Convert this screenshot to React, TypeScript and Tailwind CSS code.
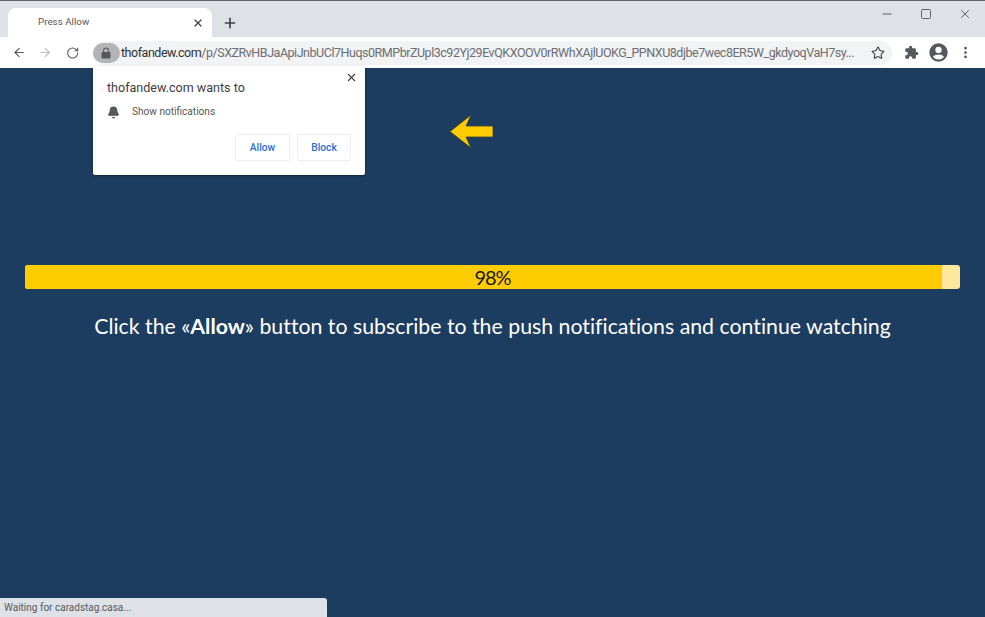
import React from "react";
import { ArrowLeft, ArrowRight, RotateCw, X, Plus, Star, Bell, Minus, Square, MoreVertical } from "lucide-react";

const ui = "font-['Roboto','Noto_Sans',sans-serif]";

export default function App() {
  return (
    <div className={`relative w-[985px] h-[617px] overflow-hidden flex flex-col bg-[#1c3d5f] ${ui}`}>
      {/* Tab strip */}
      <div className="h-[37px] shrink-0 flex items-end bg-[#dee1e6] border-t border-t-[#5f6368] pl-[8px]">
        <div className="w-[204px] h-[29px] bg-white rounded-t-[8px] flex items-center pl-[30px] pr-[8px] justify-between">
          <span className="text-[9.8px] text-[#55585c]">Press Allow</span>
          <X size={12} strokeWidth={2.4} className="text-[#3c4043]" />
        </div>
        <div className="h-[29px] flex items-center ml-[10px]">
          <Plus size={16} strokeWidth={2.4} className="text-[#3c4043]" />
        </div>
        <div className="ml-auto flex items-start self-start pt-[6px] pr-[13px] gap-[26px] text-[#55585c]">
          <Minus size={14} strokeWidth={1.6} />
          <Square size={12} strokeWidth={1.8} className="mt-[1px]" />
          <X size={14} strokeWidth={1.6} />
        </div>
      </div>
      {/* Toolbar */}
      <div className="h-[31px] shrink-0 bg-white flex items-center pl-[12px] pr-[12px]">
        <ArrowLeft size={15} strokeWidth={1.8} className="text-[#55585c]" />
        <ArrowRight size={15} strokeWidth={1.8} className="text-[#b9bcc0] ml-[12px]" />
        <RotateCw size={14} strokeWidth={1.9} className="text-[#55585c] ml-[13px]" />
        <div className="ml-[14px] w-[799px] h-[24px] rounded-full bg-[#f1f3f4] flex items-center shrink-0">
          <div className="w-[27px] h-[20px] rounded-full bg-[#b4b4b6] flex items-center justify-center shrink-0">
            <svg width="10" height="12" viewBox="0 0 10 12" fill="#55585c">
              <path d="M1.5 5h7a1 1 0 0 1 1 1v4.5a1 1 0 0 1-1 1h-7a1 1 0 0 1-1-1V6a1 1 0 0 1 1-1z" />
              <path d="M2.6 5V3.4a2.4 2.4 0 0 1 4.8 0V5" fill="none" stroke="#55585c" strokeWidth="1.1" />
            </svg>
          </div>
          <div className="ml-[1px] text-[12.5px] leading-[16px] tracking-[-0.47px] text-[#6b6e72] whitespace-nowrap w-[733px] shrink-0">
            <span className="text-[#2f3134]">thofandew.com</span>/p/SXZRvHBJaApiJnbUCl7Huqs0RMPbrZUpl3c92Yj29EvQKXOOV0rRWhXAjlUOKG_PPNXU8djbe7wec8ER5W_gkdyoqVaH7sy...
          </div>
          <Star size={14} strokeWidth={1.9} className="text-[#3c4043] ml-[17px] shrink-0" />
        </div>
        <svg width="15" height="15" viewBox="0 0 24 24" className="ml-[12px] text-[#55585c] shrink-0" fill="currentColor">
          <path d="M20.5 11H19V7a2 2 0 0 0-2-2h-4V3.5a2.5 2.5 0 0 0-5 0V5H4a2 2 0 0 0-2 2v3.8h1.5a2.7 2.7 0 0 1 0 5.4H2V20a2 2 0 0 0 2 2h3.8v-1.5a2.7 2.7 0 0 1 5.4 0V22H17a2 2 0 0 0 2-2v-4h1.5a2.5 2.5 0 0 0 0-5z" />
        </svg>
        <svg width="21" height="21" viewBox="0 0 24 24" className="ml-[9px] text-[#55585c] shrink-0" fill="currentColor">
          <path d="M12 1.5a10.5 10.5 0 1 0 0 21 10.5 10.5 0 0 0 0-21zm0 4a3.6 3.6 0 1 1 0 7.2 3.6 3.6 0 0 1 0-7.2zm0 14.6a8 8 0 0 1-6.4-3.3c1.6-1.6 4.2-2.5 6.4-2.5s4.8.9 6.4 2.5a8 8 0 0 1-6.4 3.3z" />
        </svg>
        <MoreVertical size={15} strokeWidth={2.4} className="text-[#55585c] ml-[9px] shrink-0" />
      </div>
      {/* Page */}
      <div className="flex-1 flex flex-col items-center pt-[197px] px-[25px]">
        <div className="relative w-full h-[24px] rounded-[3px] bg-[#ffe79b] overflow-hidden flex items-center justify-center">
          <div className="absolute left-0 top-0 bottom-0 w-[917px] bg-[#ffcc02]" />
          <span className="relative text-[20px] leading-none tracking-[-1px] text-[#1a1a1a] font-['Lato',sans-serif]">98%</span>
        </div>
        <p className="mt-[23px] text-[21.3px] leading-[28px] text-white whitespace-nowrap font-['Lato',sans-serif] [font-variant-ligatures:none]">
          Click the «<b className="font-bold">Allow</b>» button to subscribe to the push notifications and continue watching
        </p>
      </div>
      {/* Arrow */}
      <svg width="46" height="36" viewBox="0 0 46 36" className="absolute left-[449px] top-[114px]">
        <path d="M1 17.5 L22 1 L17 12 H44 V23 H17 L22 34 Z" fill="#ffcc02" stroke="#3a3f2f" strokeWidth="0.8" />
      </svg>
      {/* Permission popup */}
      <div className="absolute left-[93px] top-[66px] w-[272px] h-[109px] bg-white rounded-[2px] shadow-[0_1px_3px_rgba(0,0,0,0.4)] flex flex-col pl-[14px] pr-[14px]">
        <X size={13} strokeWidth={2} className="absolute right-[7px] top-[5px] text-[#3c4043]" />
        <div className="mt-[13px] text-[12.55px] leading-[18px] text-[#3c4043]">thofandew.com wants to</div>
        <div className="mt-[8px] flex items-center text-[10.1px] leading-[14px] text-[#55585c]">
          <Bell size={13} fill="#55585c" className="text-[#55585c]" />
          <span className="ml-[12px]">Show notifications</span>
        </div>
        <div className="mt-[15px] flex justify-end gap-[7px]">
          <div className="w-[55px] h-[27px] rounded-[2px] border border-[#eceef0] flex items-center justify-center text-[10.2px] font-medium text-[#2a6fd0]">Allow</div>
          <div className="w-[54px] h-[27px] rounded-[2px] border border-[#eceef0] flex items-center justify-center text-[10.2px] font-medium text-[#2a6fd0]">Block</div>
        </div>
      </div>
      {/* Status bubble */}
      <div className="absolute left-0 bottom-0 w-[327px] h-[19px] bg-[#dee1e6] rounded-tr-[3px] pl-[4px] flex items-center text-[10px] text-[#55585c]">
        Waiting for caradstag.casa...
      </div>
    </div>
  );
}
